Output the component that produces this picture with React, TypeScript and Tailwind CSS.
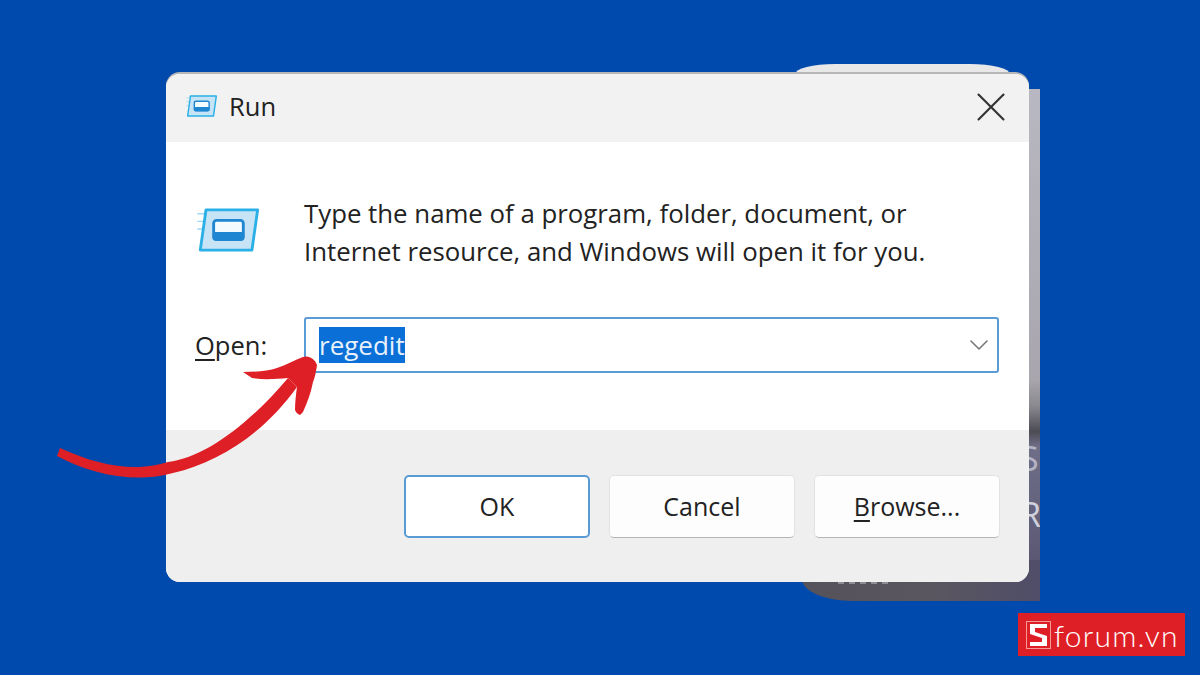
import { X, ChevronDown } from 'lucide-react'

function RunIcon({ className }: { className: string }) {
  return (
    <svg viewBox="0 0 64 46" className={className}>
      <path d="M0 6h8M0 14h6M0 22h5" stroke="#9fd8f2" strokeWidth="1.5" />
      <path d="M9 2h54l-6 42H3z" fill="#c6e4f5" stroke="#2ab0e6" strokeWidth="3" strokeLinejoin="round" />
      <rect x="17" y="13" width="31" height="20" rx="3" fill="#f4fbff" stroke="#1f86d2" strokeWidth="3" />
      <rect x="16" y="25" width="33" height="9" rx="3" fill="#1f86d2" />
    </svg>
  )
}

function DialogButton({ children, primary }: { children: React.ReactNode; primary?: boolean }) {
  return (
    <button
      className={
        primary
          ? 'w-[186px] h-[63px] rounded-[5px] bg-white border-2 border-[#5a9bd5] text-[25px] text-[#222]'
          : 'w-[186px] h-[63px] rounded-[5px] bg-[#fdfdfd] border border-[#e2e2e2] border-b-[#b4b4b4] text-[25px] text-[#222]'
      }
    >
      {children}
    </button>
  )
}

export default function App() {
  return (
    <div className="relative w-[1200px] h-[675px] overflow-hidden bg-[#004aad] font-['Open_Sans','Noto_Sans',sans-serif]">
      {/* bits of the photo left behind the dialog */}
      <div className="absolute left-[795px] top-[64px] w-[215px] h-[20px] rounded-[40px_40px_0_0/10px_10px_0_0] bg-[#e8e8e8]" />
      <div className="absolute left-[1000px] top-[89px] w-[40px] h-[511px] overflow-hidden bg-[linear-gradient(#b8b8c2_0%,#a8a5ad_57%,#8b8990_62%,#4c4c54_67%,#6f6e88_70%,#5f5d78_88%,#4f4d68_100%)]">
        <span className="absolute left-[20px] top-[349px] text-[34px] leading-[40px] text-[#b4b4c4]">S</span>
        <span className="absolute left-[20px] top-[405px] text-[34px] leading-[40px] text-[#d0d0dc]">R</span>
      </div>
      <div className="absolute left-[802px] top-[560px] w-[238px] h-[41px] rounded-bl-[50px_22px] bg-[linear-gradient(90deg,#55525a,#5a5660_55%,#4f4d68_100%)]" />
      <div className="absolute left-[838px] top-[582px] w-[50px] border-t-2 border-dashed border-[#8f8d94]" />

      <div className="absolute left-[166px] top-[74px] w-[863px] h-[508px] rounded-[14px] overflow-hidden bg-white flex flex-col shadow-[0_-2px_0_#b7b7b7]">
        <div className="h-[68px] bg-[#f2f2f2] flex items-center pl-[20px] pr-[13px] pb-[2px] shrink-0">
          <div className="flex items-center gap-[12px] mb-[2px]">
            <RunIcon className="w-[31px] h-[22px]" />
            <span className="text-[25.5px] text-[#222]">Run</span>
          </div>
          <X className="ml-auto w-[50px] h-[50px] text-[#333]" strokeWidth={1} />
        </div>

        <div className="flex-1 flex flex-col px-[29px]">
          <div className="flex pt-[52px] gap-[43px]">
            <RunIcon className="w-[66px] h-[44px] mt-[14px] shrink-0" />
            <p className="text-[25.8px] leading-[38px] text-[#222] w-[690px]">
              Type the name of a program, folder, document, or
              <br />
              Internet resource, and Windows will open it for you.
            </p>
          </div>
          <div className="flex items-center mt-[47px]">
            <span className="text-[25.5px] text-[#222] w-[109px]">
              <span className="underline underline-offset-4">O</span>pen:
            </span>
            <div className="w-[695px] h-[56px] border-2 border-[#5a9bd5] rounded-[3px] flex items-center pl-[13px] pr-[2px]">
              <span className="bg-[#0a6fd6] text-[#e8f1fb] text-[26px] leading-[36px]">regedit</span>
              <ChevronDown className="ml-auto w-[32px] h-[32px] text-[#777]" strokeWidth={1.2} />
            </div>
          </div>
        </div>

        <div className="h-[152px] bg-[#efefef] flex justify-end items-start gap-[19px] pt-[45px] pr-[29px] shrink-0">
          <DialogButton primary>OK</DialogButton>
          <DialogButton>Cancel</DialogButton>
          <DialogButton>
            <span className="underline underline-offset-4">B</span>rowse...
          </DialogButton>
        </div>
      </div>

      <svg viewBox="0 0 1200 675" className="absolute inset-0 w-[1200px] h-[675px] pointer-events-none">
        <path
          d="M60 448 C 88 461 115 468 140 467 C 150 466.500 160 464.500 168 462 C 205 458 250 423 288 378 L 297 387 C 265 432 220 462 173 473 C 135 484 90 474 57 456 Z"
          fill="#df1f26"
        />
        <path
          d="M243 372 C 256 372 268 371 277 368 C 286 365 295 360 303 357 C 309 355 315 359 317 365 C 316 372 315 377 313 382 C 311 393 307 403 303 412 L 300 415 C 297 414 296 412 295 410 C 295 402 296 394 297 387 L 288 378 C 276 379 263 380 252 378 C 249 376 246 374 243 372 Z"
          fill="#df1f26"
        />
      </svg>

      <div className="absolute left-[1018px] top-[613px] w-[167px] h-[43px] bg-[#df1f26] flex items-center pl-[8px] gap-[3px]">
        <svg viewBox="0 0 25 28" className="w-[25px] h-[28px]">
          <rect x="0.5" y="0.5" width="24" height="27" fill="none" stroke="#f59a9a" strokeWidth="1" />
          <path d="M4 3H21V7H9V11L21 15V25H4V21H16V17L4 13Z" fill="#fff" />
        </svg>
        <span className="text-[30px] leading-none text-white font-light font-['Lato',sans-serif] tracking-[1.2px]">forum.vn</span>
      </div>
    </div>
  )
}
